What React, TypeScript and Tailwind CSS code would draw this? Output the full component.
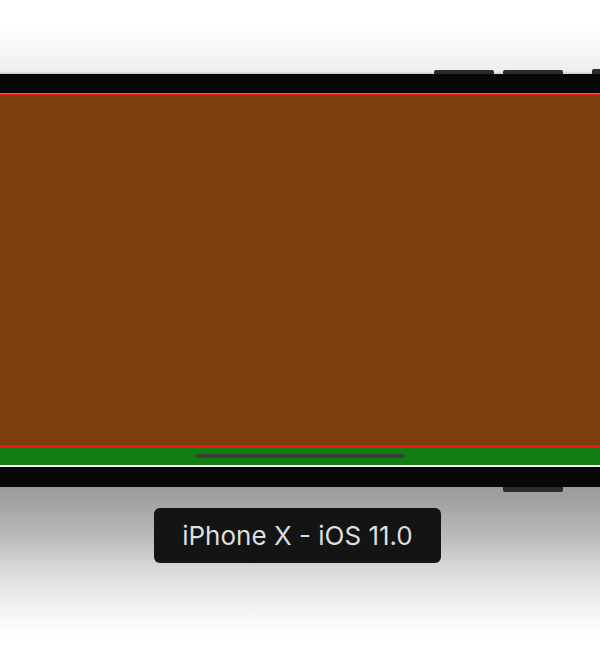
export default function App() {

  return (

    <div className="w-[600px] h-[658px] overflow-hidden flex flex-col bg-white font-['Inter','Liberation_Sans',sans-serif]">

      {/* TOP: backdrop + side buttons */}

      <div className="h-[74px] shrink-0 flex items-end overflow-hidden bg-[linear-gradient(to_bottom,#ffffff_0px,#ffffff_22px,#f8f8f8_48px,#eeeeee_71px,#cfcfcf_74px)]">

        <div className="shrink-0 ml-[434px] w-[60px] h-[4px] rounded-t-[2px] bg-[#2b2b2b]" />
        <div className="shrink-0 ml-[9px] w-[60px] h-[4px] rounded-t-[2px] bg-[#2b2b2b]" />
        <div className="shrink-0 ml-[29px] w-[20px] h-[5px] rounded-tl-[2px] bg-[#2b2b2b]" />

      </div>

      {/* PHONE */}

      <div className="shrink-0 flex flex-col bg-[#080808]">

        <div className="h-[19px]" />

        <div className="h-[1px] bg-[#ff5a5a]" />
        <div className="h-[1px] bg-[#f01c1c]" />

        <div className="h-[350px] bg-[#7c3e0d]" />

        <div className="h-[3px] bg-[#f41313]" />

        <div className="h-[17px] bg-[#0f7d12] flex justify-center pt-[6px]">
          <div className="w-[208px] h-[4px] rounded-full bg-[#3b3b3b]" />
        </div>

        <div className="h-[2px] bg-white" />

        <div className="h-[20px]" />

      </div>

      {/* BOTTOM: shadow + label */}

      <div className="flex-1 flex flex-col bg-[linear-gradient(to_bottom,#9c9c9c_0px,#a6a6a6_20px,#bdbdbd_53px,#dadada_83px,#f4f4f4_123px,#ffffff_150px)]">

        <div className="shrink-0 ml-[503px] w-[60px] h-[5px] rounded-b-[2px] bg-[#2b2b2b]" />

        <div className="shrink-0 mt-[16px] ml-[154px] w-[287px] h-[55px] rounded-[6px] bg-[#141414] flex items-center justify-center">
          <span className="text-[26px] leading-none text-[#dedede] tracking-[0px]">iPhone X - iOS 11.0</span>
        </div>

      </div>

    </div>

  );

}
